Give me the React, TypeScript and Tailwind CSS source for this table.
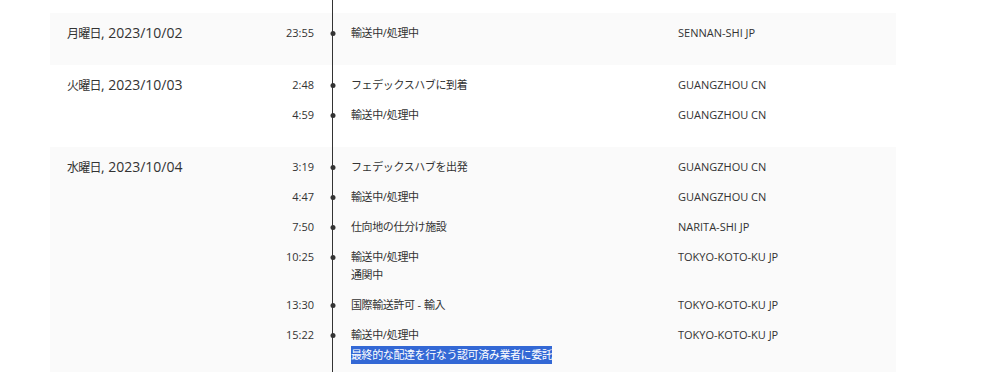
import React from "react";

type Ev = { time: string; text: string[]; loc: string; hl?: number };
type Row = { date: string; bg: string; events: Ev[] };

const rows: Row[] = [
  {
    date: "月曜日, 2023/10/02",
    bg: "bg-[#fafafa]",
    events: [{ time: "23:55", text: ["輸送中/処理中"], loc: "SENNAN-SHI JP" }],
  },
  {
    date: "火曜日, 2023/10/03",
    bg: "bg-white",
    events: [
      { time: "2:48", text: ["フェデックスハブに到着"], loc: "GUANGZHOU CN" },
      { time: "4:59", text: ["輸送中/処理中"], loc: "GUANGZHOU CN" },
    ],
  },
  {
    date: "水曜日, 2023/10/04",
    bg: "bg-[#fafafa]",
    events: [
      { time: "3:19", text: ["フェデックスハブを出発"], loc: "GUANGZHOU CN" },
      { time: "4:47", text: ["輸送中/処理中"], loc: "GUANGZHOU CN" },
      { time: "7:50", text: ["仕向地の仕分け施設"], loc: "NARITA-SHI JP" },
      { time: "10:25", text: ["輸送中/処理中", "通関中"], loc: "TOKYO-KOTO-KU JP" },
      { time: "13:30", text: ["国際輸送許可 - 輸入"], loc: "TOKYO-KOTO-KU JP" },
      {
        time: "15:22",
        text: ["輸送中/処理中", "最終的な配達を行なう認可済み業者に委託"],
        loc: "TOKYO-KOTO-KU JP",
        hl: 1,
      },
    ],
  },
];

const lineBg =
  "bg-[linear-gradient(#333,#333)] bg-no-repeat bg-[length:1px_100%] bg-[position:282px_0]";

function Mixed({ text, cjk }: { text: string; cjk: string }) {
  const parts = text.split(/([\u3000-\u9fff\uff00-\uffef]+)/).filter(Boolean);
  return (
    <>
      {parts.map((p, i) =>
        /[\u3000-\u9fff\uff00-\uffef]/.test(p) ? (
          <span key={i} className={cjk}>
            {p}
          </span>
        ) : (
          <span key={i}>{p}</span>
        )
      )}
    </>
  );
}

export default function App() {
  return (
    <div
      className="w-[989px] h-[372px] overflow-hidden bg-white text-[#333] text-[11px] leading-[18px]"
      style={{ fontFamily: '"Open Sans", "Noto Sans CJK JP", sans-serif' }}
    >
      <div className="pl-[50px] w-[896px]">
        <div className={`h-[13px] ${lineBg}`} />
        {rows.map((r) => (
          <div key={r.date} className={`flex py-[11px] ${r.bg} ${lineBg}`}>
            <div className="w-[200px] pl-[17px] shrink-0 text-[14px]">
              <Mixed text={r.date} cjk="text-[12px] tracking-[-0.7px]" />
            </div>
            <div className="flex flex-col gap-[12px] pb-[12px]">
              {r.events.map((e) => (
                <div key={e.time} className="flex items-start">
                  <div className="w-[64px] text-right shrink-0">{e.time}</div>
                  <div className="w-[37px] h-[18px] shrink-0 flex items-center justify-center">
                    <div className="w-[5px] h-[5px] rounded-full bg-[#333] translate-x-[0.5px]" />
                  </div>
                  <div className="w-[327px] shrink-0 flex flex-col items-start">
                    {e.text.map((t, i) =>
                      e.hl === i ? (
                        <span key={i} className="bg-[#3368d5] text-white mt-[2px]">
                          <Mixed text={t} cjk="tracking-[-0.4px]" />
                        </span>
                      ) : (
                        <span key={i}>
                          <Mixed text={t} cjk="tracking-[-0.4px]" />
                        </span>
                      )
                    )}
                  </div>
                  <div>{e.loc}</div>
                </div>
              ))}
            </div>
          </div>
        ))}
      </div>
    </div>
  );
}
